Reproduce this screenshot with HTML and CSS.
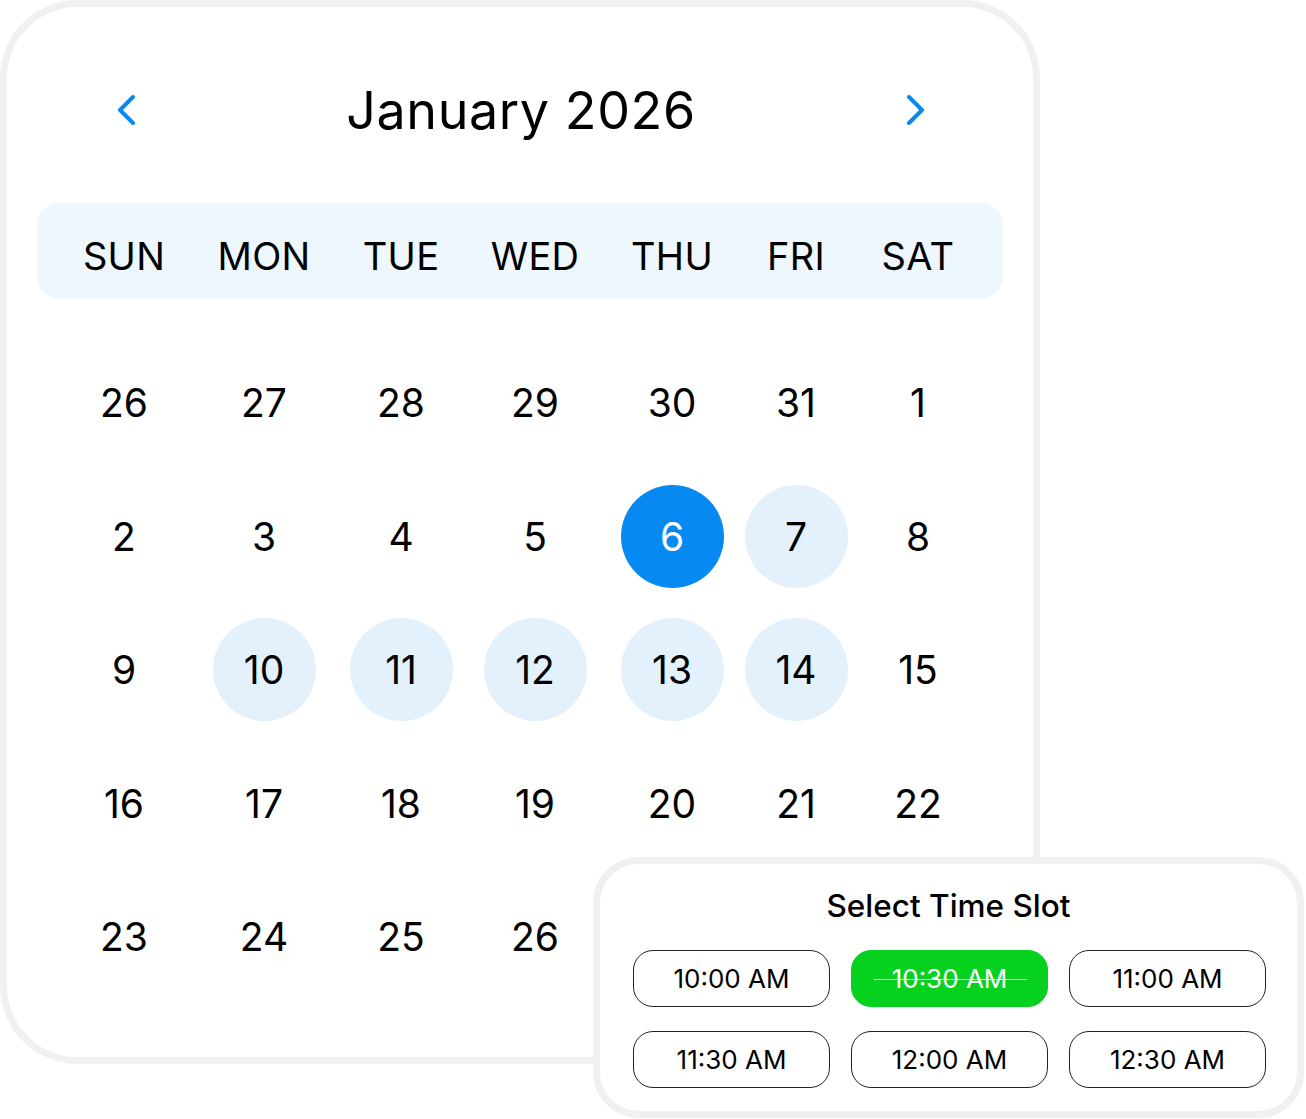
FILE: index.html
```html
<!DOCTYPE html>
<html lang="en">
<head>
<meta charset="utf-8">
<title>Calendar</title>
<link rel="stylesheet" href="styles.css">
</head>
<body>
<div class="stage">
  <section class="calendar">
    <header class="cal-head">
      <button class="nav prev" aria-label="Previous month">
        <svg viewBox="0 0 30 30" width="30" height="30"><path d="M21 2 L8 15 L21 28" fill="none" stroke="#0a8af0" stroke-width="4" stroke-linecap="round" stroke-linejoin="round"/></svg>
      </button>
      <h1 class="title">January 2026</h1>
      <button class="nav next" aria-label="Next month">
        <svg viewBox="0 0 30 30" width="30" height="30"><path d="M9 2 L22 15 L9 28" fill="none" stroke="#0a8af0" stroke-width="4" stroke-linecap="round" stroke-linejoin="round"/></svg>
      </button>
    </header>
    <div class="weekdays">
      <span>SUN</span><span>MON</span><span>TUE</span><span>WED</span><span>THU</span><span>FRI</span><span>SAT</span>
    </div>
    <div class="dates">
      <span class="day"><i>26</i></span><span class="day"><i>27</i></span><span class="day"><i>28</i></span><span class="day"><i>29</i></span><span class="day"><i>30</i></span><span class="day"><i>31</i></span><span class="day"><i>1</i></span>
      <span class="day"><i>2</i></span><span class="day"><i>3</i></span><span class="day"><i>4</i></span><span class="day"><i>5</i></span><span class="day"><i class="sel">6</i></span><span class="day"><i class="range">7</i></span><span class="day"><i>8</i></span>
      <span class="day"><i>9</i></span><span class="day"><i class="range">10</i></span><span class="day"><i class="range">11</i></span><span class="day"><i class="range">12</i></span><span class="day"><i class="range">13</i></span><span class="day"><i class="range">14</i></span><span class="day"><i>15</i></span>
      <span class="day"><i>16</i></span><span class="day"><i>17</i></span><span class="day"><i>18</i></span><span class="day"><i>19</i></span><span class="day"><i>20</i></span><span class="day"><i>21</i></span><span class="day"><i>22</i></span>
      <span class="day"><i>23</i></span><span class="day"><i>24</i></span><span class="day"><i>25</i></span><span class="day"><i>26</i></span>
    </div>
  </section>

  <section class="slots">
    <h2 class="slots-title">Select Time Slot</h2>
    <div class="slot-grid">
      <button class="slot">10:00 AM</button>
      <button class="slot taken">10:30 AM</button>
      <button class="slot">11:00 AM</button>
      <button class="slot">11:30 AM</button>
      <button class="slot">12:00 AM</button>
      <button class="slot">12:30 AM</button>
    </div>
  </section>
</div>
</body>
</html>
```

FILE: styles.css
```css
* { box-sizing: border-box; }

html, body {
  margin: 0;
  padding: 0;
  background: #ffffff;
}

body {
  font-family: "Inter", "Noto Sans", "Liberation Sans", sans-serif;
  color: #000;
}

.stage {
  position: relative;
  width: 1306px;
  height: 1119px;
  overflow: hidden;
}

.calendar {
  width: 1040px;
  height: 1064px;
  border: 7px solid #eff0f0;
  border-radius: 78px;
  background: #fff;
  padding: 63px 30px 0;
}

.cal-head {
  height: 80px;
  display: flex;
  align-items: center;
  justify-content: space-between;
  padding: 0 73px 0 75px;
}

.nav {
  width: 30px;
  height: 30px;
  padding: 0;
  border: 0;
  background: none;
  display: flex;
}

.title {
  margin: 0;
  font-size: 52px;
  font-weight: 400;
  letter-spacing: 0.6px;
}

.weekdays {
  margin-top: 53px;
  height: 96px;
  background: #eef6fe;
  border-radius: 22px;
  padding: 10px 17px 0;
  display: grid;
  grid-template-columns: 140px 140px 134px 134px 140px 108px 136px;
  align-items: center;
  font-size: 38px;
  font-weight: 400;
  letter-spacing: 0.3px;
}

.weekdays span { text-align: center; }

.dates {
  margin-top: 52px;
  padding: 0 17px;
  display: grid;
  grid-template-columns: 140px 140px 134px 134px 140px 108px 136px;
  grid-auto-rows: 103px;
  row-gap: 30.5px;
  font-size: 39px;
}

.day {
  display: flex;
  align-items: center;
  justify-content: center;
}

.day i {
  font-style: normal;
  width: 103px;
  height: 103px;
  border-radius: 50%;
  display: flex;
  align-items: center;
  justify-content: center;
  flex-shrink: 0;
}

.day i.sel { background: #0689f0; color: #fff; }
.day i.range { background: #e3f1fc; }

.slots {
  position: absolute;
  left: 593px;
  top: 857px;
  width: 711px;
  height: 261px;
  background: #fff;
  border: 7px solid #eff0f0;
  border-radius: 46px;
  padding: 22px 33px 0;
}

.slots-title {
  margin: 0;
  height: 40px;
  line-height: 40px;
  text-align: center;
  font-size: 31.5px;
  font-weight: 500;
}

.slot-grid {
  margin-top: 24px;
  display: grid;
  grid-template-columns: repeat(3, 197px);
  grid-auto-rows: 57px;
  column-gap: 21px;
  row-gap: 24px;
}

.slot {
  position: relative;
  font-family: inherit;
  font-size: 26px;
  color: #000;
  background: #fff;
  border: 1.5px solid #222;
  border-radius: 20px;
  padding: 0;
}

.slot.taken {
  background: #07d11f;
  border-color: #07d11f;
  color: #fff;
}

.slot.taken::after {
  content: "";
  position: absolute;
  left: 22px;
  right: 20px;
  top: 50%;
  height: 1.5px;
  background: #fff;
}
```
